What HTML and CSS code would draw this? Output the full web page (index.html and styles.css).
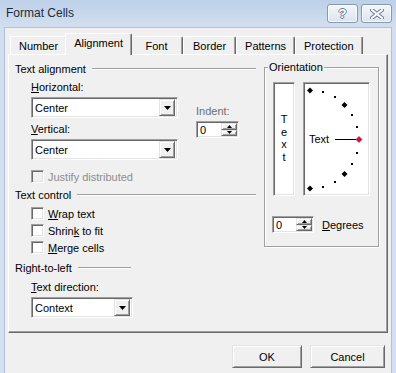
FILE: index.html
```html
<!DOCTYPE html>
<html lang="en">
<head>
    <meta charset="UTF-8">
    <title>Format Cells</title>
    <link rel="stylesheet" href="styles.css">
</head>
<body>
    <div class="window">
        <div class="titlebar">
            <span class="title">Format Cells</span>
            <div class="caption-btns">
                <span class="cbtn help">?</span>
                <span class="cbtn close">
                    <svg width="14" height="10" viewBox="0 0 14 10">
                        <path d="M2 1l10 8M12 1L2 9" stroke="#6d7c90" stroke-width="4" stroke-linecap="square"/>
                        <path d="M2 1l10 8M12 1L2 9" stroke="#fff" stroke-width="2" stroke-linecap="square"/>
                    </svg>
                </span>
            </div>
        </div>

        <div class="client">
            <!-- tab strip -->
            <div class="tabs">
                <div class="tab">Number</div>
                <div class="tab active">Alignment</div>
                <div class="tab">Font</div>
                <div class="tab">Border</div>
                <div class="tab">Patterns</div>
                <div class="tab">Protection</div>
            </div>

            <div class="panel">
                <div class="left-col">
                    <div class="section-title">Text alignment</div>

                    <div class="align-row">
                        <div class="selects">
                            <div class="field-label"><u>H</u>orizontal:</div>
                            <div class="combo">
                                <span class="combo-value">Center</span>
                                <span class="combo-btn"><svg width="7" height="4"><path d="M0 0h7L3.5 4z"/></svg></span>
                            </div>
                            <div class="field-label gap"><u>V</u>ertical:</div>
                            <div class="combo">
                                <span class="combo-value">Center</span>
                                <span class="combo-btn"><svg width="7" height="4"><path d="M0 0h7L3.5 4z"/></svg></span>
                            </div>
                        </div>
                        <div class="indent">
                            <div class="field-label dim">Indent:</div>
                            <div class="spin">
                                <span class="spin-value">0</span>
                                <span class="spin-arrows">
                                    <span class="arrow"><svg width="5" height="3"><path d="M0 3h5L2.5 0z"/></svg></span>
                                    <span class="arrow"><svg width="5" height="3"><path d="M0 0h5L2.5 3z"/></svg></span>
                                </span>
                            </div>
                        </div>
                    </div>

                    <div class="check disabled"><span class="box"></span>Justify distributed</div>

                    <div class="section-title control">Text control</div>
                    <div class="check first"><span class="box"></span><span><u>W</u>rap text</span></div>
                    <div class="check"><span class="box"></span><span>Shrin<u>k</u> to fit</span></div>
                    <div class="check"><span class="box"></span><span><u>M</u>erge cells</span></div>

                    <div class="section-title short">Right-to-left</div>
                    <div class="field-label rtl"><u>T</u>ext direction:</div>
                    <div class="combo narrow">
                        <span class="combo-value">Context</span>
                        <span class="combo-btn"><svg width="7" height="4"><path d="M0 0h7L3.5 4z"/></svg></span>
                    </div>
                </div>

                <fieldset class="orientation">
                    <legend>Orientation</legend>
                    <div class="orient-boxes">
                        <div class="vtext sunken">
                            <span>T</span><span>e</span><span>x</span><span>t</span>
                        </div>
                        <div class="dial sunken">
                            <svg width="66" height="112" viewBox="0 0 66 112">
                                <g fill="#000">
                                    <path d="M6 4.5l3 3-3 3-3-3z"/>
                                    <path d="M40.5 19l3 3-3 3-3-3z"/>
                                    <path d="M40.5 88l3 3-3 3-3-3z"/>
                                    <path d="M6 102.5l3 3-3 3-3-3z"/>
                                    <rect x="18" y="8" width="2" height="2"/>
                                    <rect x="30" y="13" width="2" height="2"/>
                                    <rect x="47" y="31" width="2" height="2"/>
                                    <rect x="52" y="43" width="2" height="2"/>
                                    <rect x="52" y="69" width="2" height="2"/>
                                    <rect x="47" y="80" width="2" height="2"/>
                                    <rect x="30" y="98" width="2" height="2"/>
                                    <rect x="18" y="103" width="2" height="2"/>
                                </g>
                                <text x="5" y="60" class="dial-text">Text</text>
                                <path d="M31 56.5h21" stroke="#000" stroke-width="1"/>
                                <path d="M55 53.5l3 3-3 3-3-3z" fill="#d0143c" stroke="#8a0c22" stroke-width="0.6"/>
                            </svg>
                        </div>
                    </div>
                    <div class="degrees-row">
                        <div class="spin small">
                            <span class="spin-value">0</span>
                            <span class="spin-arrows">
                                <span class="arrow"><svg width="5" height="3"><path d="M0 3h5L2.5 0z"/></svg></span>
                                <span class="arrow"><svg width="5" height="3"><path d="M0 0h5L2.5 3z"/></svg></span>
                            </span>
                        </div>
                        <span><u>D</u>egrees</span>
                    </div>
                </fieldset>
            </div>

            <div class="footer">
                <button class="btn ok">OK</button>
                <button class="btn cancel">Cancel</button>
            </div>
        </div>
    </div>
</body>
</html>
```

FILE: styles.css
```css
body {
    margin: 0;
    font-family: 'Liberation Sans', Arial, sans-serif;
    font-size: 11px;
    color: #000;
}

.window {
    width: 396px;
    height: 373px;
    display: flex;
    flex-direction: column;
    background: linear-gradient(#bdd0e8 0, #d2dfef 27px, #d3e0f0 100%);
    overflow: hidden;
}

.titlebar {
    height: 27px;
    flex-shrink: 0;
    display: flex;
    align-items: center;
    padding: 0 4px 0 6px;
}

.title {
    flex: 1;
    font-size: 12px;
    color: #1e2a3a;
    margin-top: -1px;
}

.caption-btns {
    display: flex;
    gap: 3px;
    align-self: flex-start;
    margin-top: 4px;
}

.cbtn {
    width: 29px;
    height: 17px;
    border: 1px solid #8898ad;
    border-radius: 3px;
    background: linear-gradient(#f4f7fb, #dbe4ef);
    box-shadow: inset 0 0 0 1px rgba(255, 255, 255, 0.7);
    display: flex;
    align-items: center;
    justify-content: center;
}

.cbtn.help {
    font-weight: bold;
    font-size: 13px;
    color: #fff;
    text-shadow: 1px 0 #6d7c90, -1px 0 #6d7c90, 0 1px #6d7c90, 0 -1px #6d7c90;
}

.client {
    flex: 1;
    margin: 0 4px;
    background: #f0f0f0;
    border: 1px solid #b2c2d6;
    border-bottom: none;
    padding: 5px 3px 0 3px;
}

/* tab strip */
.tabs {
    display: flex;
    align-items: flex-end;
    height: 21px;
    padding-left: 2px;
    position: relative;
    z-index: 1;
}

.tab {
    height: 18px;
    min-width: 53px;
    box-sizing: border-box;
    padding: 3px 8px 0;
    text-align: center;
    border-top: 1px solid #fff;
    border-left: 1px solid #fff;
    border-right: 1px solid #696969;
    box-shadow: inset -1px 0 #a0a0a0;
    border-radius: 2px 2px 0 0;
    background: #f0f0f0;
}

.tab.active {
    height: 22px;
    margin: 0 -2px -1px;
    padding-top: 3px;
    position: relative;
    z-index: 2;
}

.panel {
    height: 279px;
    box-sizing: border-box;
    border: 1px solid;
    border-color: #fff #696969 #696969 #fff;
    box-shadow: inset -1px -1px #a0a0a0;
    display: flex;
    padding: 7px 0 0 6px;
}

.left-col {
    width: 241px;
}

.section-title {
    display: flex;
    align-items: center;
    gap: 6px;
    height: 13px;
    white-space: nowrap;
}

.section-title::after {
    content: '';
    flex: 1;
    border-top: 1px solid #a0a0a0;
    border-bottom: 1px solid #fff;
    margin-top: 1px;
}

.section-title.control {
    margin-top: 5px;
}

.section-title.short {
    margin-top: 7px;
}

.section-title.short::after {
    flex: 0 0 53px;
}

.field-label {
    height: 13px;
    line-height: 13px;
}

.field-label.gap {
    margin-top: 5px;
}

.field-label.dim {
    color: #6d6d6d;
}

.field-label.rtl {
    margin: 7px 0 0 16px;
}

.align-row {
    display: flex;
    margin-top: 6px;
    padding-left: 16px;
}

.selects .field-label + .combo {
    margin-top: 3px;
}

.combo {
    width: 147px;
    height: 21px;
    box-sizing: border-box;
    display: flex;
    align-items: center;
    background: #fff;
    border: 1px solid;
    border-color: #a0a0a0 #fff #fff #a0a0a0;
    box-shadow: inset 1px 1px #696969, inset -1px -1px #e3e3e3;
    padding: 2px 2px 2px 3px;
}

.combo.narrow {
    width: 102px;
    margin: 3px 0 0 16px;
}

.combo-value {
    flex: 1;
}

.combo-btn,
.arrow {
    box-sizing: border-box;
    display: flex;
    align-items: center;
    justify-content: center;
    background: #f0f0f0;
    border: 1px solid;
    border-color: #e3e3e3 #696969 #696969 #e3e3e3;
    box-shadow: inset 1px 1px #fff, inset -1px -1px #a0a0a0;
}

.combo-btn {
    width: 16px;
    height: 17px;
}

.indent {
    margin: 24px 0 0 18px;
}

.spin {
    width: 43px;
    height: 17px;
    margin-top: 3px;
    box-sizing: border-box;
    display: flex;
    background: #fff;
    border: 1px solid;
    border-color: #a0a0a0 #fff #fff #a0a0a0;
    box-shadow: inset 1px 1px #696969, inset -1px -1px #e3e3e3;
    padding: 1px 1px 1px 3px;
}

.spin.small {
    width: 42px;
    margin-top: 0;
}

.spin-value {
    flex: 1;
    line-height: 14px;
}

.spin-arrows {
    width: 16px;
    display: flex;
    flex-direction: column;
}

.arrow {
    flex: 1;
}

.check {
    display: flex;
    align-items: center;
    gap: 4px;
    height: 13px;
    margin: 4px 0 0 16px;
}

.check.disabled {
    margin-top: 10px;
    color: #8d8d8d;
}

.check.first {
    margin-top: 6px;
}

.box {
    width: 13px;
    height: 13px;
    box-sizing: border-box;
    background: #fff;
    border: 1px solid;
    border-color: #a0a0a0 #fff #fff #a0a0a0;
    box-shadow: inset 1px 1px #696969, inset -1px -1px #e3e3e3;
}

.check.disabled .box {
    background: #f0f0f0;
}

/* orientation group */
.orientation {
    width: 115px;
    height: 186px;
    box-sizing: border-box;
    margin: -1px 0 0 8px;
    padding: 0;
    border: 1px solid #a0a0a0;
    box-shadow: inset 1px 1px #fff, 1px 1px #fff;
}

.orientation legend {
    margin-left: 3px;
    padding: 0 1px;
    line-height: 13px;
    background: #f0f0f0;
}

.orient-boxes {
    display: flex;
    gap: 8px;
    margin: 8px 0 0 8px;
}

.sunken {
    height: 114px;
    box-sizing: border-box;
    background: #fff;
    border: 1px solid;
    border-color: #a0a0a0 #fff #fff #a0a0a0;
    box-shadow: inset 1px 1px #696969, inset -1px -1px #e3e3e3;
}

.vtext {
    width: 22px;
    display: flex;
    flex-direction: column;
    align-items: center;
    justify-content: center;
    line-height: 12.5px;
    padding-bottom: 2px;
}

.dial {
    width: 67px;
}

.dial svg {
    display: block;
}

.dial-text {
    font-family: 'Liberation Sans', Arial, sans-serif;
    font-size: 11px;
}

.degrees-row {
    display: flex;
    align-items: center;
    gap: 8px;
    margin: 20px 0 0 7px;
}

.footer {
    display: flex;
    justify-content: flex-end;
    gap: 8px;
    margin-top: 12px;
    padding-right: 3px;
}

.btn {
    height: 23px;
    font-family: 'Liberation Sans', Arial, sans-serif;
    font-size: 11px;
    background: #f0f0f0;
    border: 1px solid;
    border-color: #e3e3e3 #696969 #696969 #e3e3e3;
    box-shadow: inset 1px 1px #fff, inset -1px -1px #a0a0a0;
    padding: 0;
}

.btn.ok {
    width: 70px;
}

.btn.cancel {
    width: 75px;
}
```
